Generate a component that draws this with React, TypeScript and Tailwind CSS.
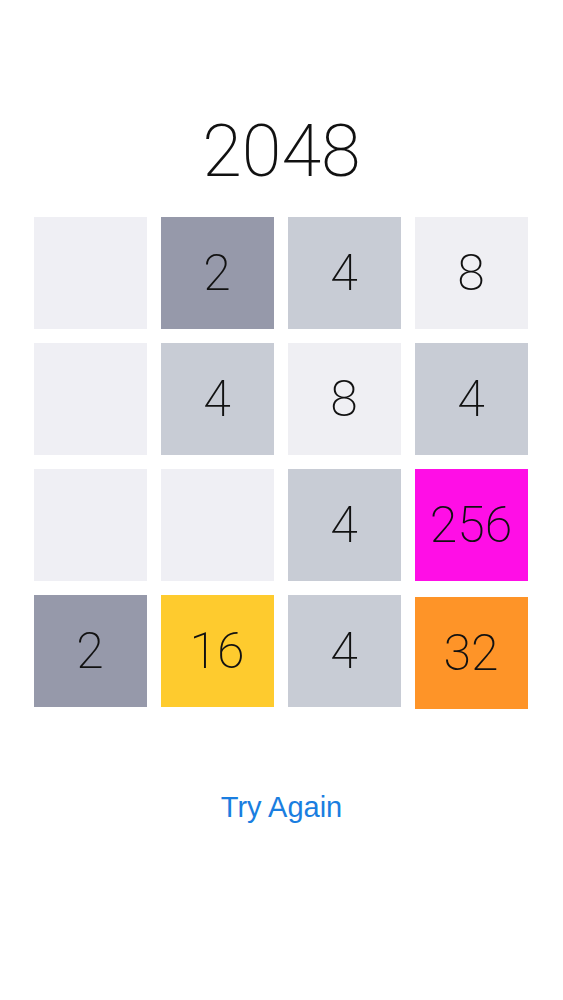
import React from 'react';

type Tile = { value: number | null; bg: string; shift?: string };

// board state, row by row
const board: Tile[][] = [
  [
    { value: null, bg: 'bg-[#efeff4]' },
    { value: 2, bg: 'bg-[#9699aa]' },
    { value: 4, bg: 'bg-[#c8ccd5]' },
    { value: 8, bg: 'bg-[#efeff3]' },
  ],
  [
    { value: null, bg: 'bg-[#efeff4]' },
    { value: 4, bg: 'bg-[#c8ccd5]' },
    { value: 8, bg: 'bg-[#efeff3]' },
    { value: 4, bg: 'bg-[#c8ccd5]' },
  ],
  [
    { value: null, bg: 'bg-[#efeff4]' },
    { value: null, bg: 'bg-[#efeff4]' },
    { value: 4, bg: 'bg-[#c8ccd5]' },
    { value: 256, bg: 'bg-[#ff0ee6]' },
  ],
  [
    { value: 2, bg: 'bg-[#9699aa]' },
    { value: 16, bg: 'bg-[#fecb2e]' },
    { value: 4, bg: 'bg-[#c8ccd5]' },
    { value: 32, bg: 'bg-[#fe9428]', shift: 'translate-y-[2px]' },
  ],
];

function Cell({ tile }: { tile: Tile }) {
  return (
    <div
      className={`w-[113px] h-[112px] flex items-center justify-center ${tile.bg} ${tile.shift ?? ''}`}
    >
      {tile.value !== null && (
        <span className="text-[50px] leading-none font-extralight text-[#111]">
          {tile.value}
        </span>
      )}
    </div>
  );
}

export default function App() {
  return (
    <div
      className="w-[563px] h-[1000px] bg-white flex flex-col items-center"
      style={{ fontFamily: 'Roboto, "Liberation Sans", sans-serif' }}
    >
      <h1 className="mt-[116px] text-[72px] leading-none font-extralight text-[#111]">
        2048
      </h1>

      <div className="mt-[29px] ml-[-2px] grid grid-cols-4 gap-x-[14px] gap-y-[14px]">
        {board.flat().map((tile, i) => (
          <Cell key={i} tile={tile} />
        ))}
      </div>

      <button
        className="mt-[86px] text-[29px] leading-none text-[#1a7ee0]"
        style={{ fontFamily: '"Liberation Sans", Arial, sans-serif' }}
      >
        Try Again
      </button>
    </div>
  );
}
